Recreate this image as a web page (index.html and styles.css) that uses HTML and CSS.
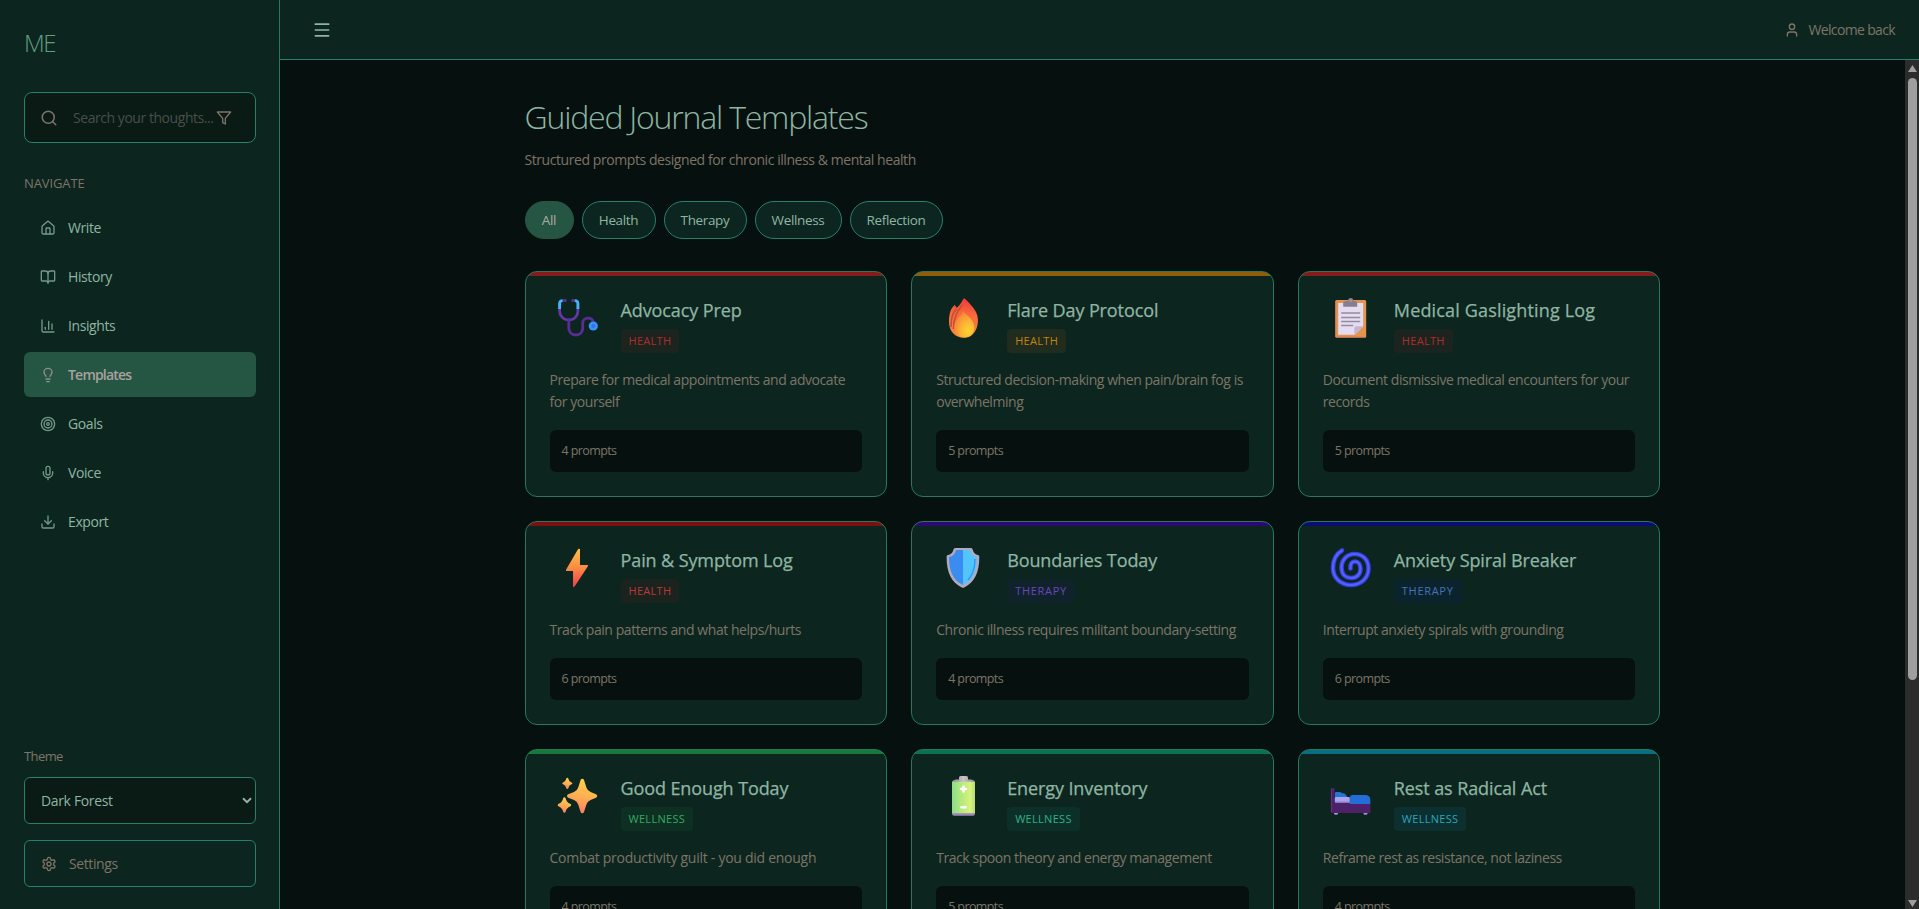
FILE: index.html
```html
<!DOCTYPE html>
<html lang="en">
<head>
<meta charset="utf-8">
<title>Guided Journal Templates</title>
<link rel="stylesheet" href="styles.css">
</head>
<body>
<div class="app">
  <aside class="sidebar">
    <div class="logo">ME</div>
    <div class="search">
      <svg class="icon i18" viewBox="0 0 24 24"><circle cx="11" cy="11" r="8"/><path d="m21 21-4.3-4.3"/></svg>
      <span class="search-text">Search your thoughts...</span>
      <svg class="icon i16" viewBox="0 0 24 24"><path d="M22 3H2l8 9.46V19l4 2v-8.54L22 3z"/></svg>
    </div>
    <div class="nav-label">NAVIGATE</div>
    <nav class="nav">
      <a class="nav-item"><svg class="icon i16" viewBox="0 0 24 24"><path d="M15 21v-8a1 1 0 0 0-1-1h-4a1 1 0 0 0-1 1v8"/><path d="M3 10a2 2 0 0 1 .7-1.5l7-6a2 2 0 0 1 2.6 0l7 6A2 2 0 0 1 21 10v9a2 2 0 0 1-2 2H5a2 2 0 0 1-2-2z"/></svg><span>Write</span></a>
      <a class="nav-item"><svg class="icon i16" viewBox="0 0 24 24"><path d="M12 7v14"/><path d="M3 18a1 1 0 0 1-1-1V4a1 1 0 0 1 1-1h5a4 4 0 0 1 4 4 4 4 0 0 1 4-4h5a1 1 0 0 1 1 1v13a1 1 0 0 1-1 1h-6a3 3 0 0 0-3 3 3 3 0 0 0-3-3z"/></svg><span>History</span></a>
      <a class="nav-item"><svg class="icon i16" viewBox="0 0 24 24"><path d="M3 3v16a2 2 0 0 0 2 2h16"/><path d="M18 17V9"/><path d="M13 17V5"/><path d="M8 17v-3"/></svg><span>Insights</span></a>
      <a class="nav-item active"><svg class="icon i16" viewBox="0 0 24 24"><path d="M15 14c.2-1 .7-1.7 1.5-2.5 1-.9 1.500-2.200 1.500-3.500A6 6 0 0 0 6 8c0 1 .2 2.200 1.500 3.500.7.7 1.300 1.500 1.500 2.500"/><path d="M9 18h6"/><path d="M10 22h4"/></svg><span>Templates</span></a>
      <a class="nav-item"><svg class="icon i16" viewBox="0 0 24 24"><circle cx="12" cy="12" r="10"/><circle cx="12" cy="12" r="6"/><circle cx="12" cy="12" r="2"/></svg><span>Goals</span></a>
      <a class="nav-item"><svg class="icon i16" viewBox="0 0 24 24"><path d="M12 19v3"/><path d="M19 10v2a7 7 0 0 1-14 0v-2"/><rect x="9" y="2" width="6" height="13" rx="3"/></svg><span>Voice</span></a>
      <a class="nav-item"><svg class="icon i16" viewBox="0 0 24 24"><path d="M21 15v4a2 2 0 0 1-2 2H5a2 2 0 0 1-2-2v-4"/><path d="m7 10 5 5 5-5"/><path d="M12 15V3"/></svg><span>Export</span></a>
    </nav>
    <div class="side-foot">
      <div class="theme-label">Theme</div>
      <div class="select"><span>Dark Forest</span><svg class="chev" viewBox="0 0 10 7"><path d="M1 1.2 5 5.2 9 1.2"/></svg></div>
      <div class="settings"><svg class="icon i16" viewBox="0 0 24 24"><path d="M12.22 2h-.44a2 2 0 0 0-2 2v.18a2 2 0 0 1-1 1.73l-.43.25a2 2 0 0 1-2 0l-.15-.08a2 2 0 0 0-2.73.73l-.22.38a2 2 0 0 0 .73 2.73l.15.1a2 2 0 0 1 1 1.72v.51a2 2 0 0 1-1 1.74l-.15.09a2 2 0 0 0-.73 2.73l.22.38a2 2 0 0 0 2.73.73l.15-.08a2 2 0 0 1 2 0l.43.25a2 2 0 0 1 1 1.73V20a2 2 0 0 0 2 2h.44a2 2 0 0 0 2-2v-.18a2 2 0 0 1 1-1.73l.43-.25a2 2 0 0 1 2 0l.15.08a2 2 0 0 0 2.73-.73l.22-.39a2 2 0 0 0-.73-2.73l-.15-.08a2 2 0 0 1-1-1.74v-.5a2 2 0 0 1 1-1.74l.15-.09a2 2 0 0 0 .73-2.73l-.22-.38a2 2 0 0 0-2.73-.73l-.15.08a2 2 0 0 1-2 0l-.43-.25a2 2 0 0 1-1-1.73V4a2 2 0 0 0-2-2z"/><circle cx="12" cy="12" r="3"/></svg><span>Settings</span></div>
    </div>
  </aside>
  <div class="right">
    <header class="topbar">
      <svg class="icon menu" viewBox="0 0 24 24"><path d="M4 5h16M4 12h16M4 19h16"/></svg>
      <div class="user"><svg class="icon i16" viewBox="0 0 24 24"><path d="M19 21v-2a4 4 0 0 0-4-4H9a4 4 0 0 0-4 4v2"/><circle cx="12" cy="7" r="4"/></svg><span>Welcome back</span></div>
    </header>
    <div class="body">
      <main class="content">
        <h1 class="title">Guided Journal Templates</h1>
        <p class="subtitle">Structured prompts designed for chronic illness &amp; mental health</p>
        <div class="chips">
          <span class="chip chip-on">All</span><span class="chip w-health">Health</span><span class="chip w-therapy">Therapy</span><span class="chip w-well">Wellness</span><span class="chip w-refl">Reflection</span>
        </div>
        <div class="grid">
          <article class="card red">
            <div class="card-head">
              <svg class="emoji" viewBox="0 0 40 40" fill="none" stroke-linecap="round">
                <path d="M1.6 11v2c0 5 3.800 9 9.300 9s9-4 9-9v-2" stroke="#6636a8" stroke-width="2.800"/>
                <path d="M10.800 22v8c0 4 2.800 7 7 7s6.900-3 6.900-7v-5c0-3 2.300-4.800 5.300-4.800 2.700 0 4.700 1.500 5.200 3.800" stroke="#5b2c98" stroke-width="2.800"/>
                <path d="M6.300 2.600h1M14.600 2.600h1" stroke="#5b2c98" stroke-width="3"/>
                <path d="M1.600 11V5.500C1.600 3.600 2.800 2.600 4.700 2.600M19.900 11V5.500c0-1.900-1.200-2.900-3.100-2.900" stroke="#43b4fb" stroke-width="2.900" stroke-linecap="butt"/>
                <circle cx="35.300" cy="28" r="4.600" fill="#3694fb"/><circle cx="35.300" cy="28" r="2" fill="#3a6fe8"/>
              </svg>
              <div class="card-t"><h2>Advocacy Prep</h2><span class="badge">HEALTH</span></div>
            </div>
            <p class="desc">Prepare for medical appointments and advocate for yourself</p>
            <div class="prompts">4 prompts</div>
          </article>
          <article class="card amber">
            <div class="card-head">
              <svg class="emoji" viewBox="0 0 40 40">
                <defs>
                  <linearGradient id="fl1" x1=".6" y1="0" x2=".5" y2="1"><stop offset="0" stop-color="#f2363c"/><stop offset=".4" stop-color="#f66a3b"/><stop offset="1" stop-color="#f98b3c"/></linearGradient>
                  <radialGradient id="fl2" cx=".7" cy=".75" r=".75"><stop offset="0" stop-color="#fdd52e"/><stop offset=".5" stop-color="#fbb136"/><stop offset="1" stop-color="#fa8038"/></radialGradient>
                </defs>
                <path d="M20 0c5 4.500 9 8.500 12 14 2 4 2.600 9 1.300 14C31.500 35 27 39.800 20 39.800 11 39.800 5 33 5 24 5 15 7 10 10.600 7c1 1 1.700 1.700 2 3C16 7 18 3.500 20 0z" fill="url(#fl1)"/>
                <path d="M7 29C7 20 9 14 12.500 11M9.500 31C9.500 22 13 13 18.500 7" fill="none" stroke="#c54c35" stroke-width="1.600"/>
                <path d="M19.500 12.500c0 4 10.800 7 10.800 17 0 6-4 10-9.800 10s-10.300-4-10.300-10c0-8 6.300-10 9.300-17z" fill="url(#fl2)"/>
              </svg>
              <div class="card-t"><h2>Flare Day Protocol</h2><span class="badge">HEALTH</span></div>
            </div>
            <p class="desc">Structured decision-making when pain/brain fog is overwhelming</p>
            <div class="prompts">5 prompts</div>
          </article>
          <article class="card red">
            <div class="card-head">
              <svg class="emoji" viewBox="0 0 40 40">
                <rect x="4.200" y="2" width="31" height="37.800" rx="1.500" fill="#e29450"/><path d="M4.700 3v35.500" stroke="#c97758"/><path d="M5 39.300h29.500" stroke="#b9695c"/>
                <path d="M7.200 5h25v23.500l-8.500 8.200H7.200z" fill="#e4dcf1"/>
                <path d="M32.200 28.300h-7a1.800 1.800 0 0 0-1.800 1.800v6.600z" fill="#c2b3d8"/>
                <path d="M12.200 8.700V5.200c0-1.400 1-2.200 2.400-2.200h2.200C17 1 18 0 19.700 0s2.700 1 2.900 3h1.300c1.400 0 2.300.8 2.300 2.200v3.500z" fill="#877f8f"/><circle cx="19.700" cy="2.800" r="1.300" fill="#cf9160"/>
                <path d="M10.200 15h19M10.200 19.500h19M10.200 23.500h19M10.200 27.500h12" stroke="#948b9f" stroke-width="1.300"/>
              </svg>
              <div class="card-t"><h2 class="wide">Medical Gaslighting Log</h2><span class="badge">HEALTH</span></div>
            </div>
            <p class="desc">Document dismissive medical encounters for your records</p>
            <div class="prompts">5 prompts</div>
          </article>
          <article class="card darkred">
            <div class="card-head">
              <svg class="emoji" viewBox="0 0 40 40">
                <defs><linearGradient id="bolt" x1="0" y1="0" x2="0" y2="1"><stop offset="0" stop-color="#fcc14a"/><stop offset=".5" stop-color="#fc8a42"/><stop offset="1" stop-color="#f23c50"/></linearGradient></defs>
                <path d="M20 1.200q.5-.7 1.500-.4.500.2.500 1V17h7.500q1 .3.400 1.300L16.800 38.300q-.6.900-1.300.7-.5-.2-.5-1V23H8.500q-1-.3-.5-1.300z" fill="url(#bolt)"/>
              </svg>
              <div class="card-t"><h2>Pain &amp; Symptom Log</h2><span class="badge">HEALTH</span></div>
            </div>
            <p class="desc">Track pain patterns and what helps/hurts</p>
            <div class="prompts">6 prompts</div>
          </article>
          <article class="card purple">
            <div class="card-head">
              <svg class="emoji" viewBox="0 0 40 40">
                <path d="M11.500 0h15.300c1.400 0 1.800 1 2.200 2.500.7 2.500 2.500 4 5 4.500 1 .3 1.300 1 1.300 2 0 16-5 25.500-15 30.400q-1.300.7-2.600 0C7.500 34.500 2.600 25 2.600 9c0-1 .4-1.700 1.400-2 2.500-.5 4.500-2 5.200-4.500C9.600 1 10 0 11.500 0z" fill="#b3aabd"/>
                <path d="M19 2h-7c-1 4-3 6.200-7 7 0 14 4 23.500 14 28z" fill="#3a8cf0"/><path d="M19 2h7c1 4 3 6.200 7 7 0 14-4 23.500-14 28z" fill="#52c5ff"/>
                <path d="M24 32c4.500-5 7-12 7-21" fill="none" stroke="#3798f0" stroke-width="1.400"/>
              </svg>
              <div class="card-t"><h2>Boundaries Today</h2><span class="badge badge-th">THERAPY</span></div>
            </div>
            <p class="desc">Chronic illness requires militant boundary-setting</p>
            <div class="prompts">4 prompts</div>
          </article>
          <article class="card blue">
            <div class="card-head">
              <svg class="emoji" viewBox="0 0 40 40" fill="none" stroke-linecap="round">
                <path d="M11 2.500C5 6 2 12 2 20c0 10 8 17 18 17s17.500-7 17.500-16.500S31 6 23.500 6 10.500 12 10.500 19.500 15 30 20.500 30 29.500 26 29.500 21s-2.500-7.500-5.500-7.500-5 2.500-4.500 7" stroke="#3540e4" stroke-width="4.600"/>
                <path d="M11 2.500C5 6 2 12 2 20c0 10 8 17 18 17s17.500-7 17.500-16.500S31 6 23.500 6 10.500 12 10.500 19.500 15 30 20.500 30 29.500 26 29.500 21s-2.500-7.500-5.500-7.500-5 2.500-4.500 7" stroke="#5561fc" stroke-width="2.200"/>
              </svg>
              <div class="card-t"><h2>Anxiety Spiral Breaker</h2><span class="badge badge-th">THERAPY</span></div>
            </div>
            <p class="desc">Interrupt anxiety spirals with grounding</p>
            <div class="prompts">6 prompts</div>
          </article>
          <article class="card green">
            <div class="card-head">
              <svg class="emoji" viewBox="0 0 40 40">
                <defs><linearGradient id="star" x1=".6" y1="0" x2=".4" y2="1"><stop offset="0" stop-color="#fdd14d"/><stop offset=".5" stop-color="#fdb052"/><stop offset="1" stop-color="#fb7d66"/></linearGradient></defs>
                <g fill="url(#star)">
                  <path d="M22.600 4q.5-1.200 1.700-1.200T26 4l2.400 7.500q1 3.300 4.200 4.500l5.400 2.300q1.200.5 1.200 1.700t-1.200 1.700l-5.400 2.200q-3.200 1.200-4.200 4.500L26 36q-.5 1.200-1.700 1.200T22.600 36l-2.400-7.600q-1-3.300-4.200-4.500l-5.800-2.200Q9 21.200 9 20t1.200-1.700L16 16q3.200-1.200 4.200-4.500z"/>
                  <path d="M9.300 1.700q.8 0 1 .9.500 3 3.200 4 .8.200.8.800t-.8.900q-2.700 1-3.200 4-.2.800-1 .8t-1-.8q-.5-3-3.200-4-.8-.2-.8-.9t.8-.8q2.700-1 3.200-4 .2-.9 1-.9z"/>
                  <path d="M6.400 21.300q1 0 1.300 1.200.9 4 4.400 5.200 1.100.4 1.100 1.300t-1.100 1.400q-3.500 1.200-4.400 5.200-.3 1.200-1.300 1.200t-1.300-1.200q-.9-4-4.400-5.200-1-.5-1-1.400t1-1.300q3.500-1.200 4.400-5.200.3-1.200 1.300-1.200z"/>
                </g>
              </svg>
              <div class="card-t"><h2>Good Enough Today</h2><span class="badge">WELLNESS</span></div>
            </div>
            <p class="desc desc-loose">Combat productivity guilt - you did enough</p>
            <div class="prompts">4 prompts</div>
          </article>
          <article class="card emerald">
            <div class="card-head">
              <svg class="emoji" viewBox="0 0 40 40">
                <defs><linearGradient id="bat"><stop offset="0" stop-color="#8edc8a"/><stop offset=".4" stop-color="#b3ea7d"/><stop offset=".8" stop-color="#d8f27c"/><stop offset="1" stop-color="#b6dc74"/></linearGradient><linearGradient id="cap"><stop offset="0" stop-color="#8d8790"/><stop offset=".5" stop-color="#c6c2c6"/><stop offset="1" stop-color="#8d8a8c"/></linearGradient></defs>
                <path d="M15 3.500V1.500Q15 0 16.500 0h6Q24 0 24 1.500v2h3Q31 4 31 6.500H8Q8 4 12 3.500z" fill="url(#cap)"/>
                <path d="M8 36h23v1.500q0 2.300-3 2.300H11q-3 0-3-2.300z" fill="#9d87b8"/>
                <rect x="8" y="5.800" width="23" height="31.400" fill="url(#bat)"/>
                <path d="M19.500 10.500v5M17 13h5M17.500 31.300h4" stroke="#fff" stroke-width="2.600" stroke-linecap="round"/>
              </svg>
              <div class="card-t"><h2>Energy Inventory</h2><span class="badge">WELLNESS</span></div>
            </div>
            <p class="desc">Track spoon theory and energy management</p>
            <div class="prompts">5 prompts</div>
          </article>
          <article class="card cyan">
            <div class="card-head">
              <svg class="emoji" viewBox="0 0 40 40">
                <path d="M4 21v-4q0-1 1-1h3q2 0 3 1.300h1.500q1.500 0 2.500 1.700l1.500 2.200z" fill="#2375d6"/>
                <path d="M3 36h4v1.500q0 1.300-2 1.300t-2-1.300zM32.500 36h4v1.500q0 1.300-2 1.300t-2-1.300z" fill="#a794e6"/>
                <path d="M0 13q0-1 1-1h1.600q1 0 1 1v14h35.800v9q0 1-1 1H1q-1 0-1-1z" fill="#4c216a"/>
                <path d="M.4 13v23" stroke="#6b3a80" stroke-width=".8"/>
                <rect x="3.800" y="21" width="15" height="6" rx="1" fill="#aaa4ee"/><path d="M4 26.300h15" stroke="#8274c4" stroke-width="1.300"/>
                <path d="M19 28v-6.500q0-2.500 2.500-2.500H35q4.300.5 4.300 5v4z" fill="#236ed6"/>
              </svg>
              <div class="card-t"><h2>Rest as Radical Act</h2><span class="badge">WELLNESS</span></div>
            </div>
            <p class="desc">Reframe rest as resistance, not laziness</p>
            <div class="prompts">4 prompts</div>
          </article>
        </div>
      </main>
      <div class="scrollbar">
        <svg class="arrow" viewBox="0 0 9 7"><path d="M4.500 0 9 7H0z"/></svg>
        <div class="thumb"></div>
        <svg class="arrow" viewBox="0 0 9 7"><path d="M0 0h9L4.500 7z"/></svg>
      </div>
    </div>
  </div>
</div>
</body>
</html>
```
FILE: styles.css
```css
* { box-sizing: border-box; margin: 0; padding: 0; }
body { background: #06110f; color: #8fb5a3; font-family: "Open Sans", "Noto Sans", sans-serif; font-size: 14px; overflow: hidden; }
.app { display: flex; width: 100vw; height: 100vh; overflow: hidden; }

.icon { fill: none; stroke: currentColor; stroke-width: 2; stroke-linecap: round; stroke-linejoin: round; flex: none; }
.i16 { width: 16px; height: 16px; }
.i18 { width: 18px; height: 18px; }

.sidebar { width: 280px; flex: none; background: #0c261f; border-right: 1px solid #26785f; padding: 24px 23px 22px 24px; display: flex; flex-direction: column; }
.logo { height: 38px; line-height: 38px; font-size: 24px; font-weight: 300; letter-spacing: -1.500px; color: #5f9f7f; }
.search { margin-top: 30px; height: 51px; border: 1px solid #26806a; border-radius: 8px; background: #0a1a14; display: flex; align-items: center; padding: 0 23px 0 15px; color: #7d7468; }
.search-text { margin-left: 15px; width: 143px; white-space: nowrap; letter-spacing: -.45px; color: #46504a; }
.nav-label { margin-top: 30px; height: 20px; line-height: 20px; font-size: 13px; letter-spacing: -.1px; color: #7d7468; }
.nav { margin-top: 12px; display: flex; flex-direction: column; gap: 4px; }
.nav-item { height: 45px; border-radius: 6px; padding: 0 16px; display: flex; align-items: center; gap: 12px; letter-spacing: -.4px; }
.nav-item .icon { opacity: .8; }
.active { background: #255543; color: #a8a19e; font-weight: 600; letter-spacing: -.8px; }
.side-foot { margin-top: auto; }
.theme-label { height: 20px; line-height: 20px; font-size: 13px; letter-spacing: -.6px; color: #7d7468; margin-bottom: 11px; }
.select { height: 47px; border: 1px solid #26806a; border-radius: 6px; background: #0a1a14; display: flex; align-items: center; justify-content: space-between; padding: 0 3px 0 16px; letter-spacing: -.35px; }
.chev { width: 10px; height: 7px; fill: none; stroke: #8fb5a3; stroke-width: 2; }
.settings { margin-top: 16px; height: 47px; border: 1px solid #26806a; border-radius: 6px; display: flex; align-items: center; gap: 12px; padding: 0 16px; letter-spacing: -.4px; color: #7d7468; }

.right { flex: 1; min-width: 0; display: flex; flex-direction: column; }
.topbar { height: 60px; flex: none; background: #0c261f; border-bottom: 1px solid #26806a; display: flex; align-items: center; justify-content: space-between; padding: 0 24px 0 32px; }
.menu { width: 20px; height: 20px; }
.user { display: flex; align-items: center; gap: 8px; letter-spacing: -.65px; color: #7d7468; }
.body { flex: 1; min-height: 0; display: flex; overflow: hidden; }
.content { width: 1200px; margin: 0 auto; padding: 32px; }

.title { font-size: 32px; font-weight: 300; letter-spacing: -1.200px; line-height: 50px; height: 50px; white-space: nowrap; }
.subtitle { margin-top: 6px; height: 23px; line-height: 23px; letter-spacing: -.43px; color: #7d7468; white-space: nowrap; }
.chips { margin-top: 30px; display: flex; gap: 8px; }
.chip { height: 38px; border: 1px solid #26806a; border-radius: 19px; background: #0c261f; text-align: center; line-height: 36px; font-size: 13.500px; letter-spacing: -.35px; white-space: nowrap; }
.chip-on { width: 49px; background: #255543; border-color: #255543; color: #b0aaa6; }
.w-health { width: 74px; }
.w-therapy { width: 83px; }
.w-well { width: 87px; }
.w-refl { width: 93px; }

.grid { margin-top: 32px; display: grid; grid-template-columns: repeat(3, 1fr); gap: 24px; }
.card { border: 1px solid #26785f; border-radius: 12px; background: linear-gradient(var(--bar) 4px, #0c261f 4px); padding: 24px; }
.card-head { display: flex; gap: 16px; }
.emoji { width: 40px; height: 40px; margin: 2px 7px 0 8px; flex: none; overflow: visible; }
.card-t h2 { font-size: 18px; font-weight: 500; -webkit-text-stroke: .25px currentColor; letter-spacing: -.1px; line-height: 28px; height: 28px; white-space: nowrap; }
.card-t .wide { letter-spacing: .16px; }
.badge { display: block; width: max-content; margin-top: 5px; height: 24px; line-height: 24px; padding: 0 8px; border-radius: 4px; font-size: 11px; letter-spacing: .3px; color: var(--ink); background: var(--tint); }
.badge-th { letter-spacing: .7px; }
.desc { margin-top: 16px; line-height: 22px; letter-spacing: -.44px; color: #7d7468; }
.desc-loose { letter-spacing: -.27px; }
.prompts { margin-top: 17px; height: 42px; line-height: 42px; border-radius: 6px; background: #06110f; padding: 0 12px; font-size: 12.500px; letter-spacing: -.6px; color: #7d7468; }

.red { --bar: #861b1b; --ink: #b02c2c; --tint: #1c241f; }
.darkred { --bar: #7a1010; --ink: #bd3737; --tint: #1a231e; }
.amber { --bar: #925d0a; --ink: #c5830f; --tint: #202c1d; }
.purple { --bar: #2b0a74; --ink: #6c45bd; --tint: #10232b; }
.blue { --bar: #0a0d74; --ink: #4474bd; --tint: #0b232c; }
.green { --bar: #16793a; --ink: #38a860; --tint: #0d3023; }
.emerald { --bar: #0a724f; --ink: #30b188; --tint: #0c3027; }
.cyan { --bar: #066f82; --ink: #2aa5bd; --tint: #0c2f30; }

.scrollbar { width: 14px; flex: none; background: #2c2c2c; display: flex; flex-direction: column; align-items: center; padding: 5px 0 2px; }
.arrow { width: 9px; height: 7px; fill: #9f9f9f; flex: none; }
.thumb { width: 9px; height: 602px; margin: 6px 0 auto; border-radius: 5px; background: #9f9f9f; }
```
